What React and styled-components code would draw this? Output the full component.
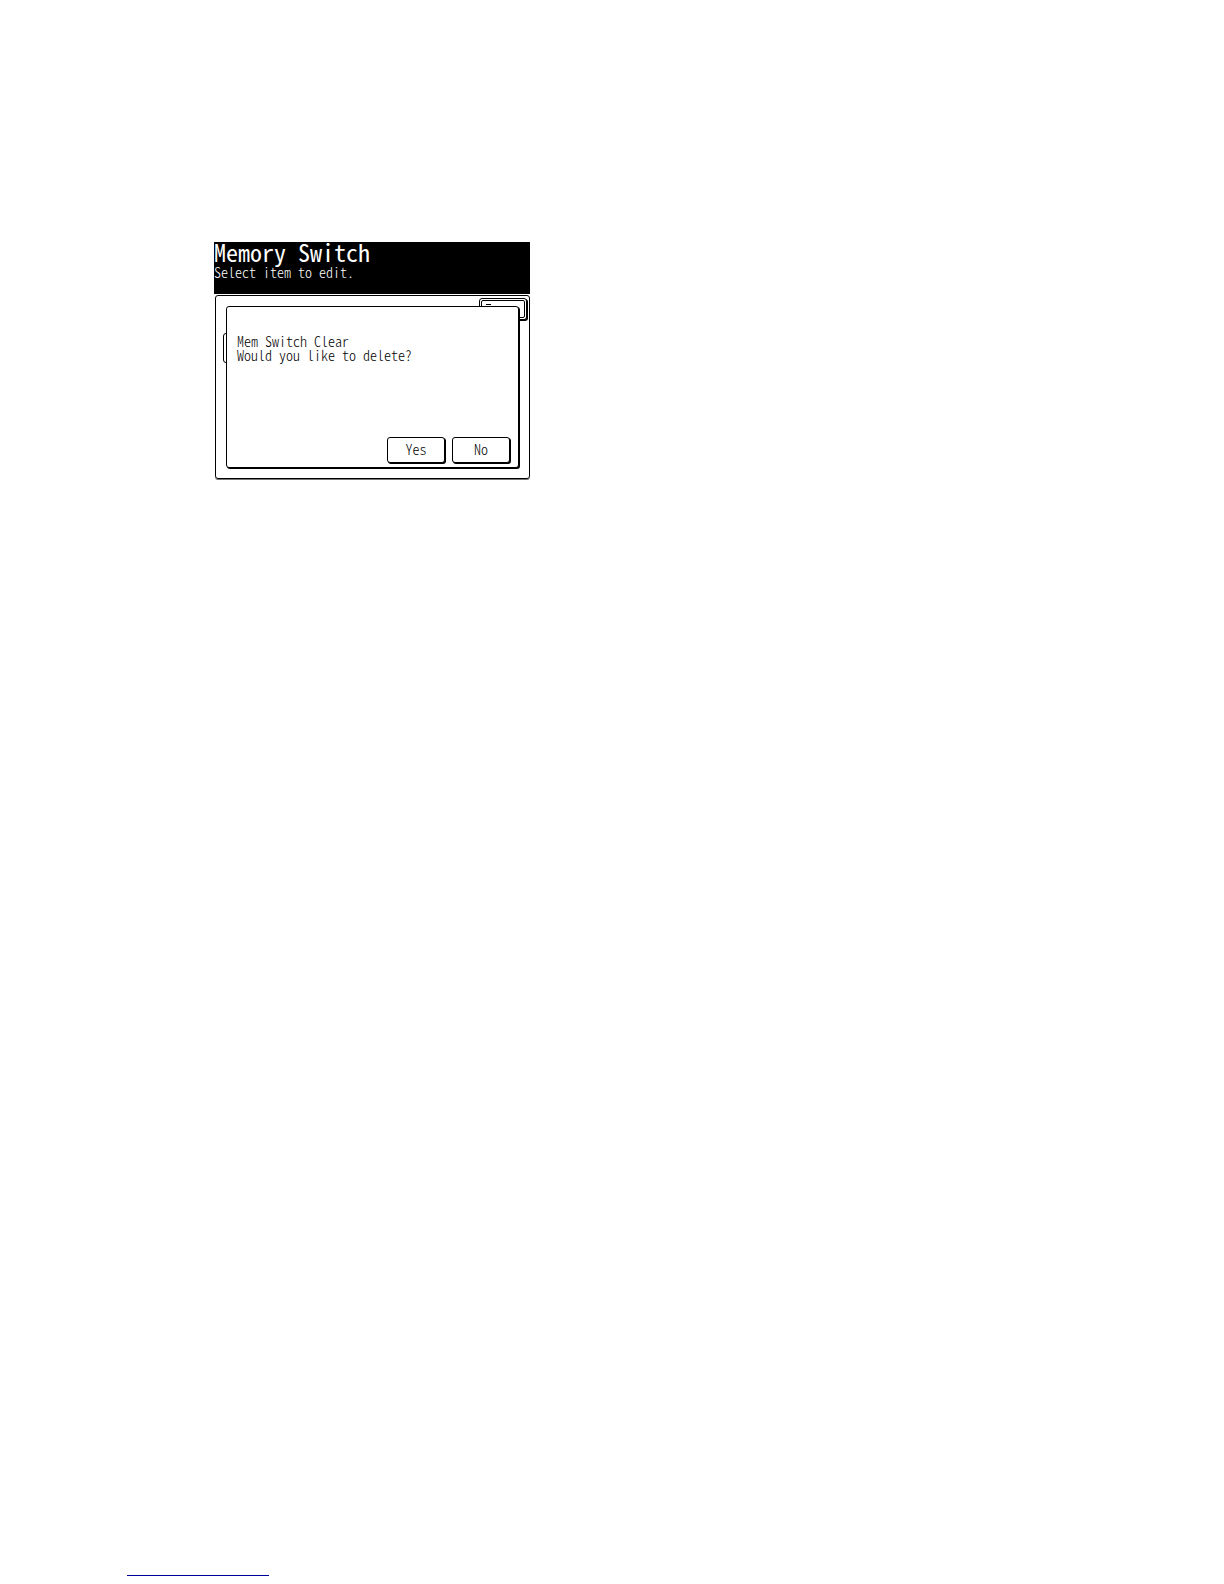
import styled, { createGlobalStyle } from "styled-components";

const GlobalStyle = createGlobalStyle`
  * {
    box-sizing: border-box;
  }

  body {
    margin: 0;
    background: #fff;
  }
`;

const App = () => {
  return (
    <>
      <GlobalStyle />
      <Page>
        <Screen>
          <Header>
            <Title>Memory Switch</Title>
            <Hint>Select item to edit.</Hint>
          </Header>
          <Panel>
            <BackButton type="button" aria-label="Enter">
              <span />
            </BackButton>
            <SideKey type="button" aria-label="Item" />
            <Dialog role="dialog" aria-label="Mem Switch Clear">
              <Message>
                Mem Switch Clear
                <br />
                Would you like to delete?
              </Message>
              <Actions>
                <Button type="button">Yes</Button>
                <Button type="button">No</Button>
              </Actions>
            </Dialog>
          </Panel>
        </Screen>
        <FooterRule />
      </Page>
    </>
  );
};

export default App;

const Page = styled.main`
  display: flex;
  flex-direction: column;
  justify-content: space-between;
  min-height: 100vh;
  padding: 242px 24px 8px 127px;
`;

/* half-width latin glyphs give the fixed pitch of the LCD */
const Screen = styled.section`
  width: 100%;
  max-width: 316px;
  margin-left: 87px;
  font-family: "Noto Sans CJK JP", "Liberation Mono", monospace;
  font-feature-settings: "hwid";
  font-size: 14px;
  font-weight: 300;
  line-height: 14px;
  color: #000;
`;

const Header = styled.header`
  height: 52px;
  margin-bottom: 1px;
  background: #000;
  color: #fff;
`;

const Title = styled.h1`
  margin: 0 0 3px;
  font-size: 24px;
  font-weight: 400;
  line-height: 20px;
`;

const Hint = styled.p`
  margin: 0;
`;

const Panel = styled.div`
  position: relative;
  margin-left: 1px;
  padding: 10px;
  border: 1px solid #000;
  border-radius: 3px;
  box-shadow: 0 1px 0 #777;
`;

/* keys of the page below, partly hidden by the dialog */
const BackButton = styled.button`
  position: absolute;
  top: 2px;
  right: 2px;
  width: 48px;
  height: 22px;
  padding: 1px;
  border: 1px solid #000;
  border-radius: 3px;
  background: #fff;
  box-shadow: 1px 1px 0 #000;

  span {
    display: block;
    height: 100%;
    border: 1px solid #000;
    border-radius: 2px;
    background: linear-gradient(#000, #000) 4px 3px / 5px 1px no-repeat;
  }
`;

const SideKey = styled.button`
  position: absolute;
  top: 37px;
  left: 7px;
  width: 24px;
  height: 30px;
  border: 1px solid #000;
  border-radius: 3px;
  background: #fff;
`;

const Dialog = styled.div`
  position: relative;
  display: flex;
  flex-direction: column;
  justify-content: space-between;
  min-height: 162px;
  padding: 27px 8px 4px 10px;
  border: 1px solid #000;
  border-radius: 3px;
  background: #fff;
  box-shadow: 1px 1px 0 #000;
`;

const Message = styled.p`
  margin: 0;
`;

const Actions = styled.div`
  display: flex;
  justify-content: flex-end;
  gap: 7px;
`;

const Button = styled.button`
  width: 58px;
  height: 26px;
  padding: 0 0 2px;
  border: 1px solid #000;
  border-radius: 3px;
  background: #fff;
  color: #000;
  font: inherit;
  font-feature-settings: inherit;
  box-shadow: 1px 1px 0 #000;
`;

const FooterRule = styled.hr`
  width: 142px;
  margin: 0;
  border: 0;
  border-top: 1px solid #00009c;
`;
